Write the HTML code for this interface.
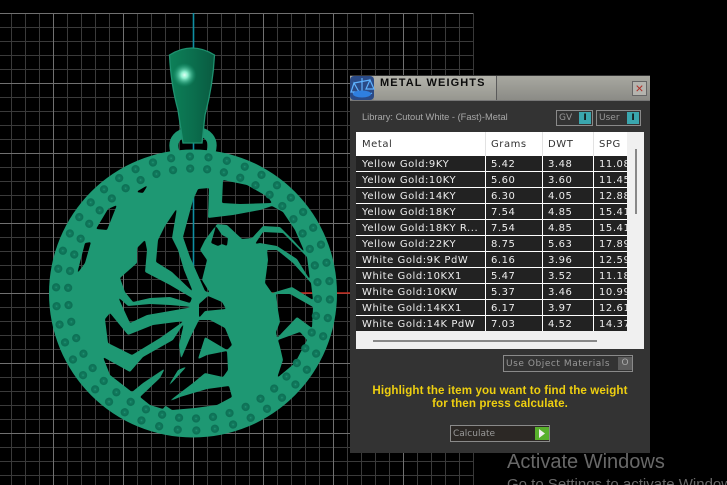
<!DOCTYPE html>
<html><head><meta charset="utf-8"><style>
html,body{margin:0;padding:0;background:#000}
#p{position:relative;width:727px;height:485px;overflow:hidden;background:#000;font-family:"Liberation Sans",sans-serif}
#p>svg{position:absolute;left:0;top:0}
#d{position:absolute;left:350px;top:75px;width:300px;height:378px;background:#333}
#d div,#d span{position:absolute}
#tb{left:0;top:1px;width:300px;height:24px;background:linear-gradient(#a8a8a0,#8b8b86);border-bottom:1px solid #777}
#tl{left:24px;top:0;width:122px;height:24px;background:linear-gradient(#b4b4ac,#96968f);border-right:1px solid #5a5a5a}
#tt{left:30px;top:0;font-weight:bold;font-size:11px;letter-spacing:1.1px;color:#0c0c0c;white-space:nowrap;line-height:14px}
#x{left:282px;top:5px;width:13px;height:13px;background:#b4b4ae;border:1px solid #666;color:#b03028;font-size:14px;line-height:13px;text-align:center}
#lib{left:12px;top:36px;font-size:9.3px;color:#a8a8a8;white-space:nowrap;line-height:12px}
.t{border:1px solid #8a8a8a;box-sizing:border-box;color:#999;font-family:"DejaVu Sans",sans-serif;font-size:9px;white-space:nowrap}
.k{background:#3aa6ae;color:#111;font-weight:bold;text-align:center}
#w{left:6px;top:57px;width:288px;height:217px;background:#f0f0f0}
#c{left:0;top:0;width:271px;height:199px;overflow:hidden;background:#fff;font-family:"DejaVu Sans",sans-serif;font-size:10px;letter-spacing:.55px}
.r{left:0;width:271px;height:15px;background:#222;color:#eee}
.r span,.h span{top:1px;line-height:15px;white-space:nowrap}
.h{left:0;top:0;width:271px;height:24px;color:#333}
.h span{line-height:24px}
.a{left:6px}.b{left:135px}.e{left:192px}.f{left:243px}
.v{top:0;width:1px;height:199px;background:#fff}
.hv{top:0;width:1px;height:24px;background:#e2e2e2}
#yl{left:0;top:309px;width:300px;text-align:center;color:#eecf10;font-weight:bold;font-size:11.6px;line-height:13px;letter-spacing:.1px;white-space:nowrap}
#aw{position:absolute;left:507px;top:451px;font-size:20px;color:#686868;white-space:nowrap;line-height:23px}
#aw2{position:absolute;left:507px;top:476px;font-size:15px;color:#686868;white-space:nowrap;line-height:17px}
</style></head><body><div id="p">
<svg width="727" height="485" viewBox="0 0 727 485">
<defs>
<pattern id="mn" width="14" height="14" patternUnits="userSpaceOnUse" x="11" y="13"><path d="M0.5 0V14M0 .5H14" stroke="#3a3a3a" stroke-width="1" fill="none"/></pattern>
<pattern id="mj" width="70" height="70" patternUnits="userSpaceOnUse" x="53" y="13"><path d="M0.5 0V70M0 .5H70" stroke="#707070" stroke-width="1" fill="none"/></pattern>
<radialGradient id="dg" cx=".5" cy=".5" r=".5"><stop offset="0" stop-color="#2b9c7e"/><stop offset=".25" stop-color="#127c5f"/><stop offset=".85" stop-color="#0d6f54"/><stop offset="1" stop-color="#0f7c5e"/></radialGradient>
<linearGradient id="bg" x1="0" x2="1" y1="0" y2="0"><stop offset="0" stop-color="#0d8058"/><stop offset=".5" stop-color="#0b6f4e"/><stop offset="1" stop-color="#095a40"/></linearGradient>
<radialGradient id="hl"><stop offset="0" stop-color="#e0fff4"/><stop offset=".28" stop-color="#8cf0cf"/><stop offset="1" stop-color="#16a077" stop-opacity="0"/></radialGradient>
<filter id="sm" filterUnits="userSpaceOnUse" x="0" y="0" width="727" height="485" color-interpolation-filters="sRGB"><feGaussianBlur stdDeviation=".9"/><feComponentTransfer><feFuncR type="linear" slope="4" intercept="-1.5"/><feFuncG type="linear" slope="4" intercept="-1.5"/><feFuncB type="linear" slope="4" intercept="-1.5"/></feComponentTransfer></filter>
<circle id="o" r="4.2" fill="url(#dg)"/>
<g id="s"><use href="#o" x="137"/><use href="#o" x="125"/></g>
<mask id="m" maskUnits="userSpaceOnUse" x="0" y="0" width="727" height="485"><g filter="url(#sm)"><rect width="727" height="485" fill="#fff"/>
<g fill="#000">
<polygon points="223,180 247,185 268,197 272,203 240,204 222,203"/>
<polygon points="209,188 198,189 193,200 183,237 190,257 197,273 205,291 210,293 202,280 207,260 200,250 205,240 217,224 227,225 242,239 252,238 263,226 280,227 293,240 307,255 305,253 295,230 283,212 272,206 260,210 233,215 208,218"/>
<polygon points="255,244 263,232 283,233 295,245 307,257 310,280 297,259 277,246 260,243"/>
<polygon points="267,250 277,250 293,263 311,283 313,300 292,287 272,293 265,283 268,260"/>
<polygon points="276,294 290,294 313,307 312,328 297,317 277,338 276,332 280,322 278,310"/>
<polygon points="278,340 300,332 307,340 295,363 277,378 283,360 280,347"/>
<polygon points="199,304 208,296 222,302 226,309 205,311 199,318"/>
<polygon points="211,243 216,226 222,235 228,238 227,246 222,244 218,246"/>
<polygon points="145,240 137,248 137,263 120,278 125,292 133,302 150,298 170,297 190,303 192,298 170,285 145,272 147,250"/>
<polygon points="177,208 165,226 158,240 156,262 172,272 193,292 184,270 178,250 172,238"/>
<polygon points="118,297 130,323 147,315 193,307 170,305 150,304 128,306"/>
<polygon points="110,313 105,319 108,343 132,355 160,338 184,321 153,325 128,335"/>
<polygon points="130,372 143,357 173,340 184,323 179,345 181,359 190,338 199,320 210,320 225,328 232,345 227,350 205,337 197,362 178,370 167,388 190,363 207,355 227,351 228,370 223,377 205,373 193,383 168,402 163,409 150,405 140,397 160,378 172,355 167,367 143,383 132,392 110,375 103,357"/>
<polygon points="163,404 180,397 207,389 229,386 232,397 217,405 195,408 172,410"/>
<polygon points="96,229 107,230 117,205 108,209"/>
<polygon points="77,274 85,263 91,242 85,243"/>
<polygon points="136,192 148,185 143,193"/>
</g></g></mask>
</defs>
<rect x="0" y="13" width="473.500" height="472" fill="url(#mn)"/>
<rect x="0" y="13" width="473.500" height="472" fill="url(#mj)"/>
<path d="M193.500 13V293" stroke="#0f8fa3" stroke-width="1.600"/>
<path d="M193 293H350" stroke="#c4281c" stroke-width="1.600"/>
<path d="M175 152C171 140 178 132 193 131C208 131 215 140 211 152" fill="none" stroke="#1e9873" stroke-width="9"/>
<path d="M169.500 55Q192 41 214.500 55Q213 85 205 115L202 143H183L178 110Q171 85 169.500 55Z" fill="url(#bg)" stroke="#1e9270" stroke-width="1.300"/>
<circle cx="184.500" cy="75" r="12" fill="url(#hl)"/>
<circle cx="193" cy="293.500" r="144" fill="#1e9873" mask="url(#m)"/>
<g transform="translate(193 293.500)">
<use href="#s" transform="rotate(2.5)"/><use href="#s" transform="rotate(10.3)"/><use href="#s" transform="rotate(18.2)"/><use href="#s" transform="rotate(26)"/><use href="#s" transform="rotate(33.8)"/><use href="#s" transform="rotate(41.6)"/><use href="#s" transform="rotate(49.5)"/><use href="#s" transform="rotate(57.3)"/><use href="#s" transform="rotate(65.1)"/><use href="#s" transform="rotate(73)"/><use href="#s" transform="rotate(80.8)"/><use href="#s" transform="rotate(88.6)"/><use href="#s" transform="rotate(96.4)"/><use href="#s" transform="rotate(104.3)"/><use href="#s" transform="rotate(112.1)"/><use href="#s" transform="rotate(119.9)"/><use href="#s" transform="rotate(127.8)"/><use href="#s" transform="rotate(135.6)"/><use href="#s" transform="rotate(143.4)"/><use href="#s" transform="rotate(151.2)"/><use href="#s" transform="rotate(159.1)"/><use href="#s" transform="rotate(166.9)"/><use href="#s" transform="rotate(174.7)"/><use href="#s" transform="rotate(182.6)"/><use href="#s" transform="rotate(190.4)"/><use href="#s" transform="rotate(198.2)"/><use href="#s" transform="rotate(206)"/><use href="#s" transform="rotate(213.9)"/><use href="#s" transform="rotate(221.7)"/><use href="#s" transform="rotate(229.5)"/><use href="#s" transform="rotate(237.4)"/><use href="#s" transform="rotate(245.2)"/><use href="#s" transform="rotate(253)"/><use href="#s" transform="rotate(260.8)"/><use href="#s" transform="rotate(268.7)"/><use href="#s" transform="rotate(276.5)"/><use href="#s" transform="rotate(284.3)"/><use href="#s" transform="rotate(292.2)"/><use href="#s" transform="rotate(300)"/><use href="#s" transform="rotate(307.8)"/><use href="#s" transform="rotate(315.6)"/><use href="#s" transform="rotate(323.5)"/><use href="#s" transform="rotate(331.3)"/><use href="#s" transform="rotate(339.1)"/><use href="#s" transform="rotate(347)"/><use href="#s" transform="rotate(354.8)"/>
</g>
</svg>
<div id="d">
<div id="tb"><div id="tl"></div><div id="tt">METAL WEIGHTS</div><div id="x">×</div></div>
<svg style="position:absolute;left:0;top:0" width="25" height="25" viewBox="0 0 25 25"><rect x="0" y="1" width="24" height="24" rx="4" fill="#2a4a86"/><path d="M12 3V18M4 8L20 5M4 8L1 17H9ZM20 5L16 14H24ZM3 18Q12 24 22 18" stroke="#5fb2ff" stroke-width="1.200" fill="none"/><ellipse cx="12" cy="19" rx="9" ry="3.500" fill="#2f7fe0"/></svg>
<div id="lib">Library: Cutout White - (Fast)-Metal</div>
<div class="t" style="left:206px;top:35px;width:37px;height:16px;line-height:14px;padding-left:2px">GV<span class="k" style="left:22px;top:1px;width:12px;height:12px;line-height:12px">I</span></div>
<div class="t" style="left:246px;top:35px;width:45px;height:16px;line-height:14px;padding-left:2px">User<span class="k" style="left:30px;top:1px;width:12px;height:12px;line-height:12px">I</span></div>
<div id="w">
<div id="c">
<div class="h"><span class="a">Metal</span><span class="b">Grams</span><span class="e">DWT</span><span class="f">SPG</span></div>
<div class="r" style="top:24px"><span class="a">Yellow Gold:9KY</span><span class="b">5.42</span><span class="e">3.48</span><span class="f">11.08</span></div>
<div class="r" style="top:40px"><span class="a">Yellow Gold:10KY</span><span class="b">5.60</span><span class="e">3.60</span><span class="f">11.45</span></div>
<div class="r" style="top:56px"><span class="a">Yellow Gold:14KY</span><span class="b">6.30</span><span class="e">4.05</span><span class="f">12.88</span></div>
<div class="r" style="top:72px"><span class="a">Yellow Gold:18KY</span><span class="b">7.54</span><span class="e">4.85</span><span class="f">15.41</span></div>
<div class="r" style="top:88px"><span class="a">Yellow Gold:18KY R...</span><span class="b">7.54</span><span class="e">4.85</span><span class="f">15.41</span></div>
<div class="r" style="top:104px"><span class="a">Yellow Gold:22KY</span><span class="b">8.75</span><span class="e">5.63</span><span class="f">17.89</span></div>
<div class="r" style="top:120px"><span class="a">White Gold:9K PdW</span><span class="b">6.16</span><span class="e">3.96</span><span class="f">12.59</span></div>
<div class="r" style="top:136px"><span class="a">White Gold:10KX1</span><span class="b">5.47</span><span class="e">3.52</span><span class="f">11.18</span></div>
<div class="r" style="top:152px"><span class="a">White Gold:10KW</span><span class="b">5.37</span><span class="e">3.46</span><span class="f">10.99</span></div>
<div class="r" style="top:168px"><span class="a">White Gold:14KX1</span><span class="b">6.17</span><span class="e">3.97</span><span class="f">12.61</span></div>
<div class="r" style="top:184px"><span class="a">White Gold:14K PdW</span><span class="b">7.03</span><span class="e">4.52</span><span class="f">14.37</span></div>
<div class="v" style="left:129px"></div><div class="v" style="left:186px"></div><div class="v" style="left:237px"></div>
<div class="hv" style="left:129px"></div><div class="hv" style="left:186px"></div><div class="hv" style="left:237px"></div>
</div>
<div style="left:279px;top:17px;width:2px;height:65px;background:#888"></div>
<div style="left:17px;top:208px;width:224px;height:2px;background:#888"></div>
</div>
<div class="t" style="left:153px;top:280px;width:130px;height:17px;line-height:16px;padding-left:2px;letter-spacing:.55px">Use Object Materials<span style="left:114px;top:1px;width:14px;height:13px;background:#5c5c5c;color:#aaa;text-align:center;line-height:13px;letter-spacing:0">O</span></div>
<div id="yl">Highlight the item you want to find the weight<br>for then press calculate.</div>
<div class="t" style="left:100px;top:350px;width:100px;height:17px;line-height:16px;padding-left:2px;background:#2c2825">Calculate<span style="left:84px;top:1px;width:14px;height:13px;background:#58b02c"></span><svg style="position:absolute;left:87px;top:3px" width="8" height="9" viewBox="0 0 8 9"><path d="M1 0L7 4.500L1 9Z" fill="#eee"/></svg></div>
</div>
<div id="aw">Activate Windows</div>
<div id="aw2">Go to Settings to activate Windows.</div>
</div></body></html>
